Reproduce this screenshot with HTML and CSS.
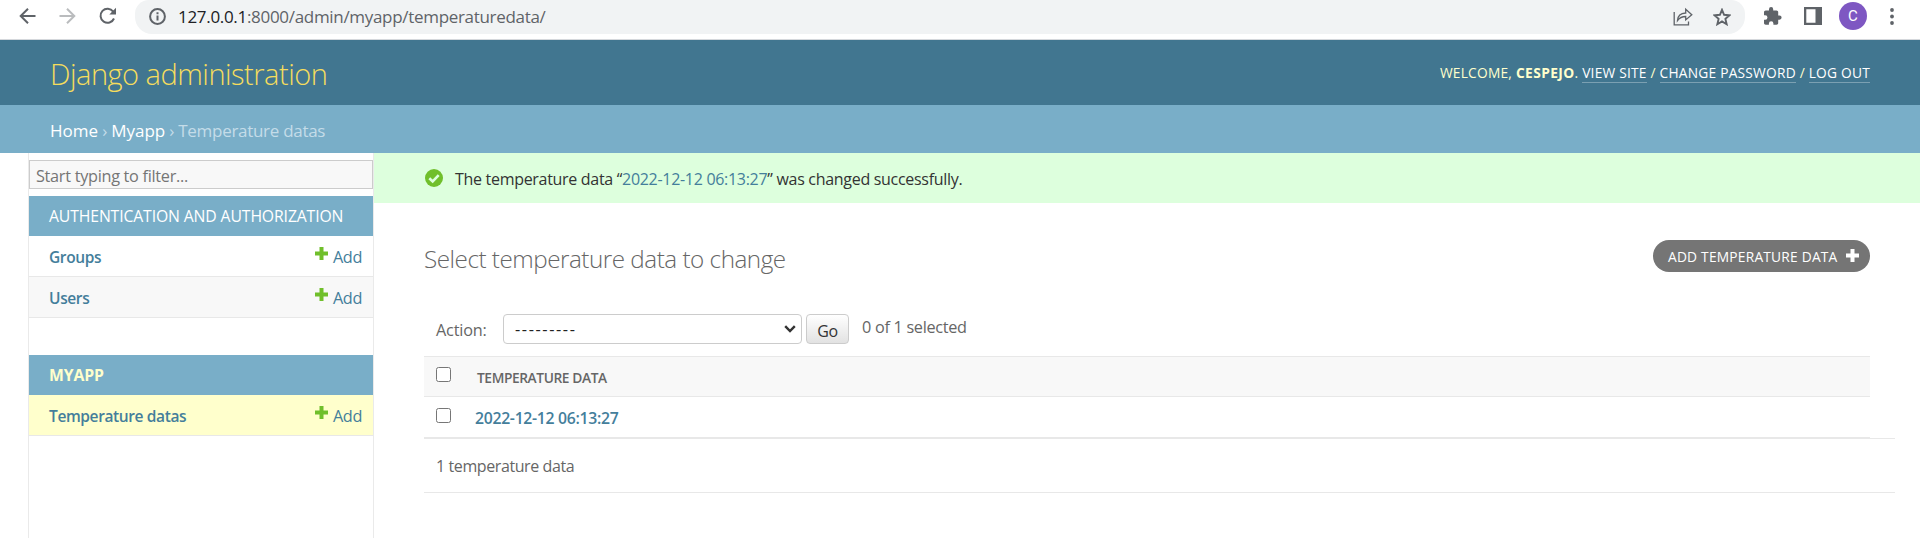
FILE: index.html
```html
<!DOCTYPE html>
<html lang="en">
<head>
<meta charset="utf-8">
<title>Select temperature data to change | Django site admin</title>
<link rel="stylesheet" href="styles.css">
</head>
<body>
<div class="browser-bar">
  <svg class="nav-icon back" viewBox="0 0 18 18"><path d="M16.500 9H2M9 1.700 1.700 9 9 16.300"/></svg>
  <svg class="nav-icon forward" viewBox="0 0 18 18"><path d="M.5 9H15M8 1.700 15.300 9 8 16.300"/></svg>
  <svg class="nav-icon reload" viewBox="0 0 18 18"><path d="M14.200 4.600A7 7 0 1 0 15 11.500"/><path class="solid" d="M17 .8v6.700h-6.700z"/></svg>
  <div class="omnibox">
    <svg class="info-icon" viewBox="0 0 17 17"><circle cx="8.5" cy="8.5" r="7.4"/><path d="M8.5 7.5v5M8.5 4.2v2"/></svg>
    <span class="url"><span class="host">127.0.0.1</span>:8000/admin/myapp/temperaturedata/</span>
    <svg class="share-icon" viewBox="0 0 20 19"><path d="M1.2 5v12.800h14.300v-3.300M4.500 13.500c.3-4.500 3-7.300 8.200-7.500V2.200L18.800 7.700l-6.100 5.200V9.500c-3.700 0-6 1-8.200 4z"/></svg>
    <svg class="star-icon" viewBox="0 0 18 18"><path d="m9 1.800 2.100 5 5.400.5-4.100 3.600 1.250 5.300L9 13.400l-4.650 2.800 1.250-5.300-4.100-3.600 5.400-.5z"/></svg>
  </div>
  <svg class="puzzle-icon" viewBox="0 0 18 18"><path d="M15.500 8.500h-1.300V5.100c0-.9-.7-1.700-1.700-1.700H9.200V2.200a2.100 2.100 0 0 0-4.200 0v1.200H1.700C.8 3.400 0 4.200 0 5.100v3.200h1.200a2.250 2.250 0 0 1 0 4.500H0V16c0 .9.800 1.700 1.700 1.700h3.200v-1.200a2.250 2.250 0 0 1 4.500 0v1.200h3.100c1 0 1.700-.8 1.700-1.700v-3.300h1.300a2.100 2.100 0 0 0 0-4.200z"/></svg>
  <svg class="panel-icon" viewBox="0 0 18 18"><path fill-rule="evenodd" d="M0 0h18v18H0zM2.300 2.300v13.400h9.200V2.300z"/></svg>
  <span class="avatar">C</span>
  <svg class="more-icon" viewBox="0 0 4 17"><circle cx="2" cy="2" r="1.900"/><circle cx="2" cy="8.500" r="1.900"/><circle cx="2" cy="15" r="1.900"/></svg>
</div>

<header class="site-header">
  <div class="branding">Django administration</div>
  <div class="user-tools">Welcome, <strong>cespejo</strong>. <a>View site</a> / <a>Change password</a> / <a>Log out</a></div>
</header>
<nav class="breadcrumbs"><span class="crumbs"><a>Home</a> › <a>Myapp</a> › Temperature datas</span></nav>

<div class="main">
  <aside class="sidebar">
    <div class="filter"><span>Start typing to filter...</span></div>
    <section class="module auth">
      <div class="caption"><span>Authentication and Authorization</span></div>
      <div class="model"><b>Groups</b><a class="add"><svg viewBox="0 0 13 13"><path d="M4.500 0h4v4.500H13v4H8.500V13h-4V8.500H0v-4h4.500z"/></svg><span>Add</span></a></div>
      <div class="model alt"><b>Users</b><a class="add"><svg viewBox="0 0 13 13"><path d="M4.500 0h4v4.500H13v4H8.500V13h-4V8.500H0v-4h4.500z"/></svg><span>Add</span></a></div>
    </section>
    <section class="module">
      <div class="caption current"><span>Myapp</span></div>
      <div class="model current"><b>Temperature datas</b><a class="add"><svg viewBox="0 0 13 13"><path d="M4.500 0h4v4.500H13v4H8.500V13h-4V8.500H0v-4h4.500z"/></svg><span>Add</span></a></div>
    </section>
  </aside>

  <main class="content">
    <div class="message">
      <svg class="check-icon" viewBox="0 0 18 18"><circle cx="9" cy="9" r="9"/><path d="m4.300 9.200 3.400 3.300 6-6.300"/></svg>
      <span class="message-text">The temperature data “<a>2022-12-12 06:13:27</a>” was changed successfully.</span>
    </div>
    <div class="title-row">
      <h1><span>Select temperature data to change</span></h1>
      <a class="add-button"><span>Add temperature data</span><svg viewBox="0 0 13 13"><path d="M4.500 0h4v4.500H13v4H8.500V13h-4V8.500H0v-4h4.500z"/></svg></a>
    </div>
    <div class="actions">
      <span class="action-label">Action:</span>
      <div class="select"><span class="dashes">---------</span><svg viewBox="0 0 12 8"><path d="m1.200 1.200 4.800 4.900 4.800-4.900"/></svg></div>
      <button class="go"><span>Go</span></button>
      <span class="counter">0 of 1 selected</span>
    </div>
    <div class="results">
      <div class="row head"><i class="box"></i><span class="column-name">Temperature data</span></div>
      <div class="row"><i class="box"></i><a class="record">2022-12-12 06:13:27</a></div>
    </div>
    <div class="paginator"><span class="total">1 temperature data</span></div>
  </main>
</div>
</body>
</html>
```
FILE: styles.css
```css
* { box-sizing: border-box; }
body { margin: 0; height: 538px; overflow: hidden; display: flex; flex-direction: column; background: #fff; color: #666; font-family: "Open Sans", "Noto Sans", sans-serif; font-size: 16.25px; white-space: nowrap; }
svg { display: block; flex: none; }

.browser-bar { height: 40px; flex: none; display: flex; align-items: flex-start; border-bottom: 1px solid #d5d8dc; }
.nav-icon { width: 18px; height: 18px; margin-top: 7px; fill: none; stroke: #5f6368; stroke-width: 2; }
.back { margin-left: 19px; }
.forward { margin-left: 22px; stroke: #babcbe; }
.reload { margin-left: 22px; }
.reload .solid { fill: #5f6368; stroke: none; }
.omnibox { display: flex; align-items: flex-start; width: 1610px; height: 34px; margin-left: 18px; padding-left: 14px; background: #f1f3f4; border-radius: 14px 14px 17px 17px; }
.info-icon { width: 17px; height: 17px; margin-top: 8px; fill: none; stroke: #5f6368; stroke-width: 2; }
.url { margin-left: 12px; line-height: 34px; font-size: 17px; letter-spacing: -0.31px; color: #5f6368; }
.host { color: #202124; }
.share-icon { width: 20px; height: 19px; margin: 7px 0 0 auto; fill: none; stroke: #5f6368; stroke-width: 1.3; }
.star-icon { width: 18px; height: 18px; margin: 8px 14px 0 20px; fill: none; stroke: #5f6368; stroke-width: 1.9; }
.puzzle-icon { width: 18px; height: 18px; margin: 7px 0 0 19px; fill: #5f6368; }
.panel-icon { width: 18px; height: 18px; margin: 7px 0 0 22px; fill: #5f6368; }
.avatar { width: 28px; height: 28px; margin: 2px 0 0 17px; border-radius: 50%; background: #7e57c2; color: #fff; font: 15px/28px Roboto, sans-serif; text-align: center; }
.more-icon { width: 4px; height: 17px; margin: 8px 0 0 23px; fill: #5f6368; }

.site-header { height: 65px; flex: none; display: flex; align-items: center; justify-content: space-between; padding: 0 50px; background: #417690; color: #ffc; }
.branding { padding-top: 2px; font-size: 29px; letter-spacing: -0.5px; font-weight: 300; color: #f5dd5d; }
.user-tools { font-size: 13.75px; letter-spacing: 0.22px; text-transform: uppercase; }
.user-tools strong { letter-spacing: 0.4px; }
.user-tools a { color: #fff; border-bottom: 1px solid #7ba0b2; }
.breadcrumbs { height: 48px; flex: none; display: flex; align-items: center; padding: 2px 50px 0; background: #79aec8; color: #c4dce8; font-size: 17px; letter-spacing: -0.29px; }
.breadcrumbs a { color: #fff; letter-spacing: 0; }

.main { flex: 1; display: flex; }
.sidebar { width: 346px; margin-left: 28px; padding-top: 7px; border: solid #eaeaea; border-width: 0 1px; }
.filter { height: 29px; padding: 3px 0 0 6px; display: flex; align-items: center; border: 1px solid #ccc; background: #f8f8f8; color: #757575; letter-spacing: -0.29px; margin-bottom: 7px; }
.auth { margin-bottom: 37px; }
.caption { height: 40px; padding-left: 20px; display: flex; align-items: center; background: #79aec8; color: #fff; letter-spacing: -0.12px; font-size: 15.75px; text-transform: uppercase; }
.caption.current { color: #ffc; font-weight: 700; }
.model { height: 41px; padding: 2px 11px 0 20px; display: flex; align-items: center; justify-content: space-between; border-bottom: 1px solid #e8e8e8; color: #447e9b; }
.model b { font-size: 15.5px; font-weight: 600; letter-spacing: -0.38px; }
.model.alt { background: #f8f8f8; }
.model.current { background: #ffc; }
.add { display: flex; align-items: center; gap: 5px; letter-spacing: -0.35px; }
.add svg { width: 13px; height: 13px; margin-bottom: 7px; fill: #70bf2b; }

.content { flex: 1; min-width: 0; }
.message { height: 50px; display: flex; align-items: center; gap: 12px; padding-left: 51px; background: #dfd; color: #333; font-size: 16px; letter-spacing: -0.3px; }
.message-text { padding-top: 2px; }
.message a { color: #447e9b; }
.check-icon { width: 18px; height: 18px; fill: #70bf2b; stroke: none; }
.check-icon path { fill: none; stroke: #dfd; stroke-width: 2.6; }
.title-row { display: flex; align-items: flex-start; justify-content: space-between; margin: 37px 50px 0; height: 74px; }
h1 { margin: 0; padding-top: 3px; font-size: 24.25px; letter-spacing: -0.49px; line-height: 32px; font-weight: 300; }
.add-button { width: 217px; height: 32px; padding: 0 11px 0 15px; display: flex; align-items: center; justify-content: space-between; border-radius: 16px; background: #757575; color: #fff; font-size: 13.75px; letter-spacing: 0.22px; text-transform: uppercase; }
.add-button svg { width: 13px; height: 13px; margin-bottom: 1px; fill: #fff; }
.actions { display: flex; height: 42px; padding-left: 62px; line-height: 30px; }
.action-label { width: 67px; padding-top: 1px; letter-spacing: -0.2px; }
.select { width: 299px; height: 30px; padding: 0 5px 0 11px; display: flex; align-items: center; justify-content: space-between; border: 1px solid #ccc; border-radius: 4px; color: #222; }
.dashes { letter-spacing: 1.6px; }
.select svg { width: 12px; height: 8px; fill: none; stroke: #333; stroke-width: 2.4; }
.go { width: 43px; height: 30px; margin-left: 4px; padding: 3px 0 0; border: 1px solid #ccc; border-radius: 4px; background: linear-gradient(#fff, #e2e2e2); color: #333; font: 16px "Open Sans", sans-serif; letter-spacing: -0.3px; }
.counter { margin: -2px 0 0 13px; letter-spacing: -0.3px; }
.results { margin: 0 50px; }
.row { height: 41px; display: flex; align-items: flex-start; border-bottom: 1px solid #e8e8e8; line-height: 42px; }
.row.head { border-top: 1px solid #e8e8e8; background: #f8f8f8; }
.box { width: 15px; height: 15px; margin: 11px 0 0 12px; border: 1px solid #767676; border-radius: 2.5px; background: #fff; }
.head .box { margin-top: 10px; }
.column-name { margin-left: 26px; font-size: 13.75px; letter-spacing: -0.4px; font-weight: 600; text-transform: uppercase; }
.record { margin-left: 24px; font-size: 15.75px; letter-spacing: -0.29px; font-weight: 600; color: #447e9b; }
.paginator { height: 55px; margin: 0 25px 0 50px; padding-left: 12px; font-size: 16px; letter-spacing: -0.4px; line-height: 55px; border: solid #e8e8e8; border-width: 1px 0; }
```
